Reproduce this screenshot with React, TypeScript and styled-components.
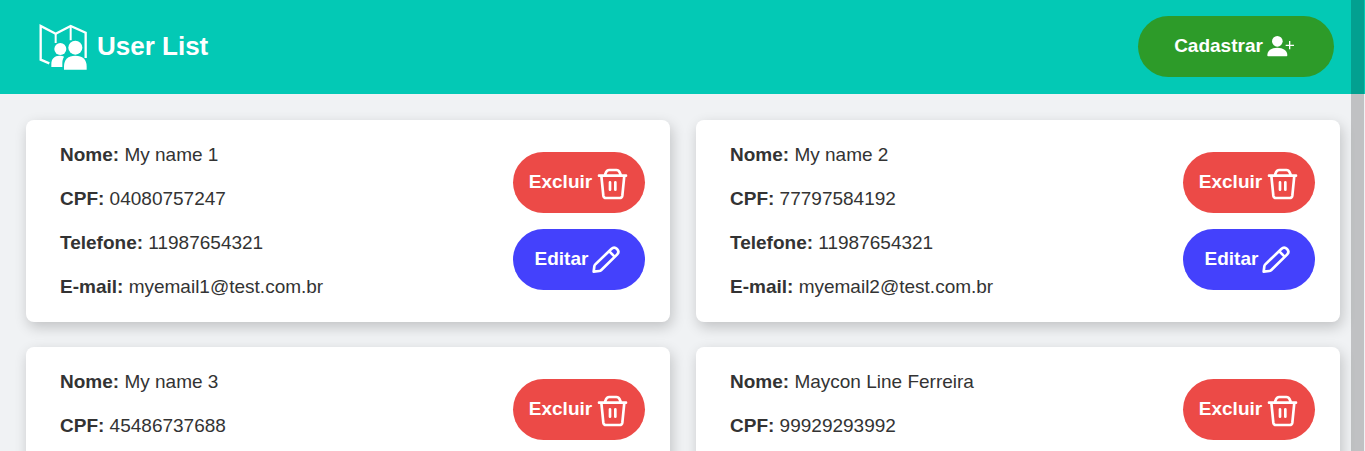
import React from 'react';
import styled, { createGlobalStyle } from 'styled-components';

const GlobalStyle = createGlobalStyle`
  *, *::before, *::after {
    box-sizing: border-box;
  }

  html {
    scrollbar-width: none;
  }

  body {
    margin: 0;
    background: #f0f2f4;
    color: #333;
    font-family: Arial, 'Liberation Sans', sans-serif;
    font-size: 19px;
    line-height: 22px;
  }
`;

const Header = styled.header`
  display: flex;
  align-items: center;
  justify-content: space-between;
  padding: 16px 31px 17px 39px;
  background: #03c9b5;
`;

const Brand = styled.div`
  display: flex;
  align-items: center;
  gap: 10px;
  color: #fff;
`;

const Title = styled.h1`
  margin: 0;
  padding-bottom: 2px;
  font-size: 26px;
  line-height: 32px;
`;

const tones = { green: '#2d9b29', red: '#ec4a47', blue: '#4441fc' };

const Button = styled.button<{ $tone: keyof typeof tones; $wide?: boolean }>`
  display: flex;
  align-items: center;
  justify-content: center;
  gap: 4px;
  width: ${({ $wide }) => ($wide ? '196px' : '132px')};
  height: 61px;
  padding: 0 3px 0 0;
  border: 0;
  border-radius: 31px;
  background: ${({ $tone }) => tones[$tone]};
  color: #fff;
  font: inherit;
  font-weight: bold;
  cursor: pointer;

  svg {
    flex: none;
  }
`;

const ButtonLabel = styled.span`
  padding-bottom: 2px;
`;

const ActionIcon = styled.svg`
  margin-top: 3px;
  overflow: visible;
`;

const Cards = styled.main`
  display: grid;
  grid-template-columns: 1fr 1fr;
  gap: 25px 26px;
  padding: 26px 25px 26px 26px;
`;

const Card = styled.article`
  display: flex;
  align-items: center;
  justify-content: space-between;
  padding: 24px 25px 24px 34px;
  border-radius: 8px;
  background: #fff;
  box-shadow: 2px 5px 14px rgba(0, 0, 0, 0.2);
`;

const Fields = styled.div`
  display: flex;
  flex-direction: column;
  gap: 22px;
`;

const Field = styled.p`
  margin: 0;
`;

const Actions = styled.div`
  display: flex;
  flex-direction: column;
  gap: 16px;
`;

const ScrollThumb = styled.div`
  position: fixed;
  top: 0;
  right: 1px;
  bottom: 0;
  width: 13px;
  background: rgba(0, 0, 0, 0.2);
  pointer-events: none;
`;

const LogoIcon = () => (
  <svg width="48" height="46" viewBox="58 42 144 138" fill="none" aria-hidden="true">
    <g stroke="#fff" strokeWidth="7">
      <path d="M89 160 63 149V48l45 23 45-23 45 20v76" />
      <path d="M108 71v28M153 48v43" strokeWidth="6" />
    </g>
    <g fill="#fff">
      <circle cx="122" cy="117" r="18" />
      <path d="M95 171v-9c0-16 10-25 24-25 6 0 11 1 14 3-4 7-5 13-5 20v11z" />
      <circle cx="167" cy="113" r="24" fill="#03c9b5" />
      <circle cx="167" cy="113" r="21" />
      <path d="M133 179v-10c0-20 12-32 34-32s34 12 34 32v10z" />
    </g>
  </svg>
);

const UserPlusIcon = () => (
  <svg width="28" height="22" viewBox="440 106 84 66" fill="none" aria-hidden="true">
    <circle cx="471" cy="122" r="16" fill="#fff" />
    <path d="M441 163c0-13 13-22 30-22s30 9 30 22c0 3-1 4-4 4h-52c-3 0-4-1-4-4z" fill="#fff" />
    <path d="M496 134h25M508 121v25" stroke="#fff" strokeWidth="4" />
  </svg>
);

const TrashIcon = () => (
  <ActionIcon width="30" height="32" viewBox="289 84 90 96" fill="none" stroke="#fff" strokeWidth="8" strokeLinecap="round" strokeLinejoin="round" aria-hidden="true">
    <path d="M298 107h81M305 107l6 60c1 5 4 7 8 7h41c4 0 7-2 8-7l6-60M315 107l3-8c2-6 6-9 11-9h21c5 0 9 3 11 9l3 8M331 127v22M347 127v22" />
  </ActionIcon>
);

const PencilIcon = () => (
  <ActionIcon width="28" height="30" viewBox="276 316 84 90" fill="none" stroke="#fff" strokeWidth="8" strokeLinecap="round" strokeLinejoin="round" aria-hidden="true">
    <path d="M281 393l2-16c0-3 1-4 3-6l48-46c5-5 12-5 17 0s5 12 0 17l-47 46c-2 2-4 3-6 3zM328 332l15 15" />
  </ActionIcon>
);

interface User {
  name: string;
  cpf: string;
  phone: string;
  email: string;
}

const users: User[] = [
  { name: 'My name 1', cpf: '04080757247', phone: '11987654321', email: 'myemail1@test.com.br' },
  { name: 'My name 2', cpf: '77797584192', phone: '11987654321', email: 'myemail2@test.com.br' },
  { name: 'My name 3', cpf: '45486737688', phone: '11987654321', email: 'myemail3@test.com.br' },
  { name: 'Maycon Line Ferreira', cpf: '99929293992', phone: '11987654321', email: 'myemail4@test.com.br' },
];

const UserCard = ({ user }: { user: User }) => (
  <Card>
    <Fields>
      <Field><strong>Nome:</strong> {user.name}</Field>
      <Field><strong>CPF:</strong> {user.cpf}</Field>
      <Field><strong>Telefone:</strong> {user.phone}</Field>
      <Field><strong>E-mail:</strong> {user.email}</Field>
    </Fields>
    <Actions>
      <Button type="button" $tone="red"><ButtonLabel>Excluir</ButtonLabel><TrashIcon /></Button>
      <Button type="button" $tone="blue"><ButtonLabel>Editar</ButtonLabel><PencilIcon /></Button>
    </Actions>
  </Card>
);

export default function App() {
  return (
    <>
      <GlobalStyle />
      <Header>
        <Brand>
          <LogoIcon />
          <Title>User List</Title>
        </Brand>
        <Button type="button" $tone="green" $wide><ButtonLabel>Cadastrar</ButtonLabel><UserPlusIcon /></Button>
      </Header>
      <Cards>
        {users.map((user) => <UserCard key={user.cpf} user={user} />)}
      </Cards>
      <ScrollThumb />
    </>
  );
}
